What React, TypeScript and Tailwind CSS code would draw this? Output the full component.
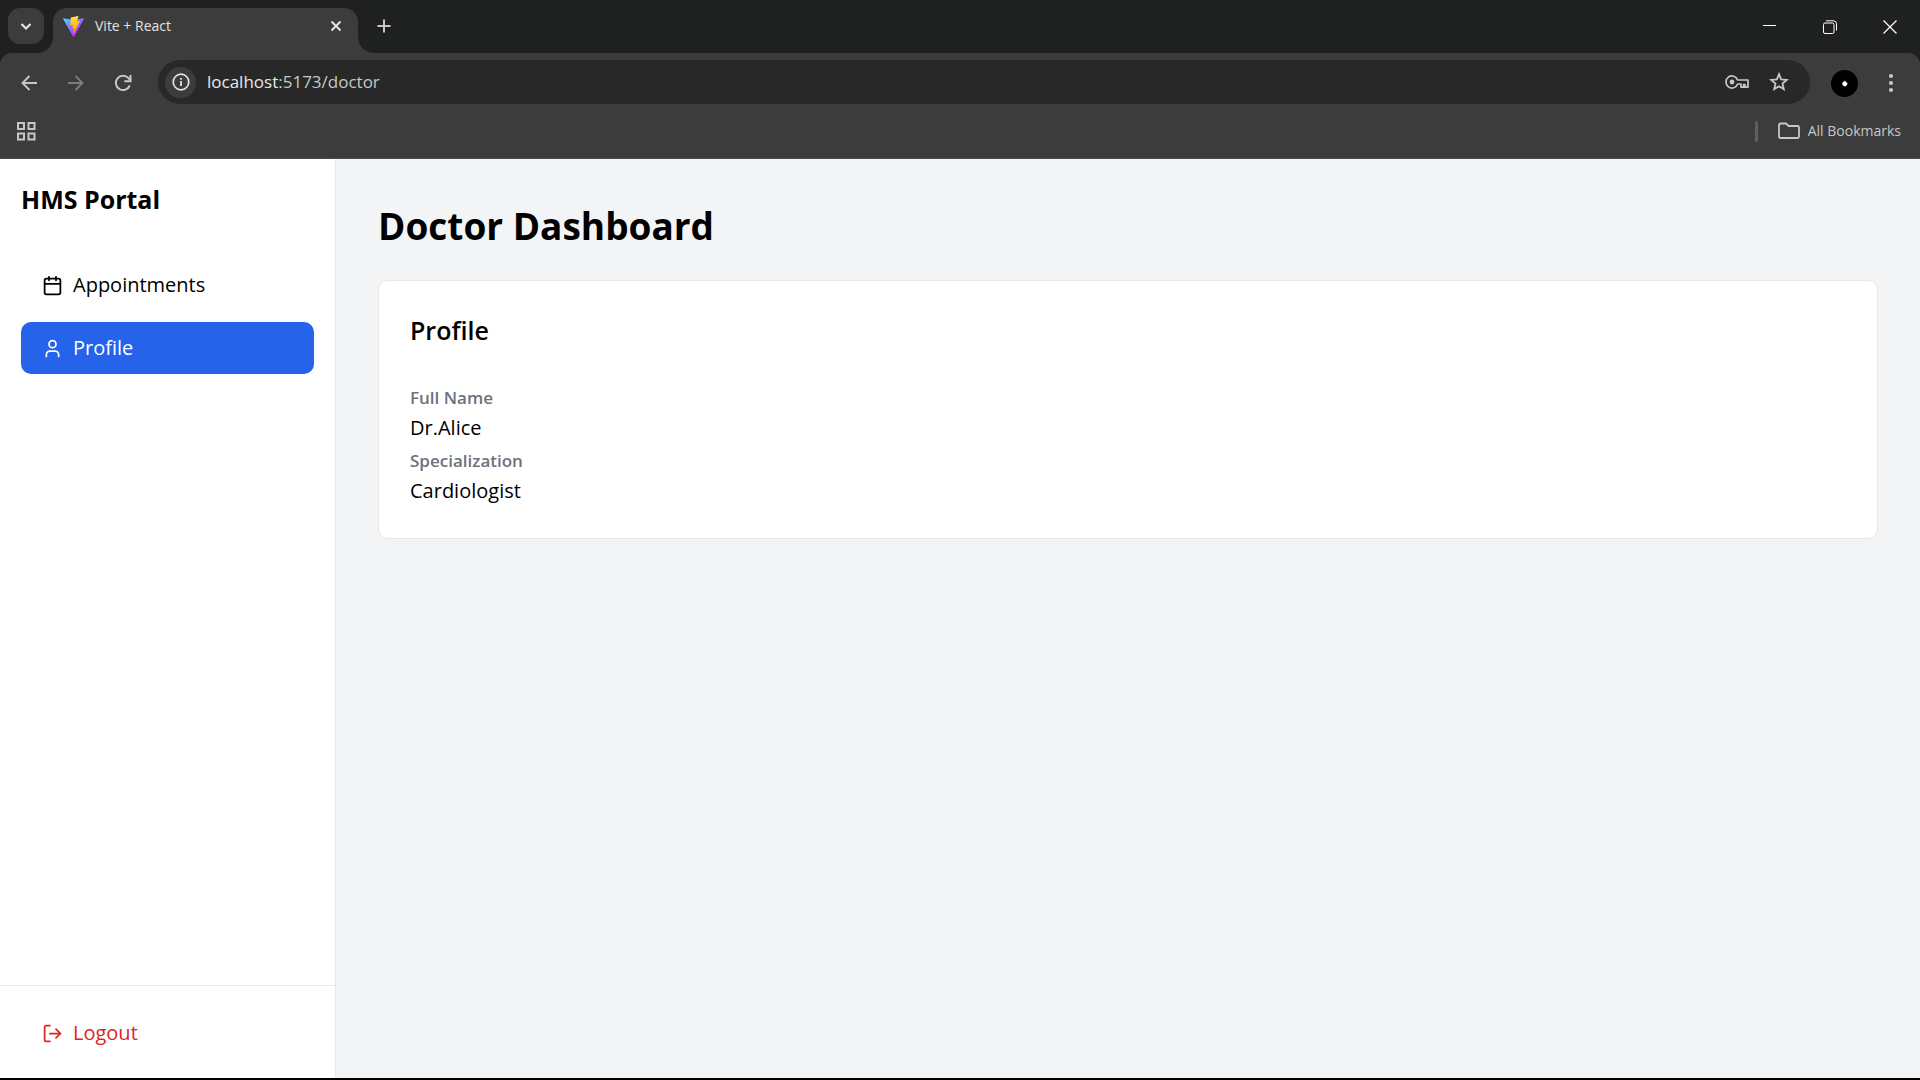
import type { ReactNode } from "react";
import { Calendar, LogOut, User, type LucideIcon } from "lucide-react";

function ViteLogo() {
  return (
    <svg viewBox="0 0 256 257" className="h-[21px] w-[21px]" aria-hidden="true">
      <defs>
        <linearGradient id="vite-body" x1="-.828%" x2="57.636%" y1="7.652%" y2="78.411%">
          <stop offset="0%" stopColor="#41D1FF" />
          <stop offset="100%" stopColor="#BD34FE" />
        </linearGradient>
        <linearGradient id="vite-bolt" x1="43.376%" x2="50.316%" y1="2.242%" y2="89.03%">
          <stop offset="0%" stopColor="#FFEA83" />
          <stop offset="8.333%" stopColor="#FFDD35" />
          <stop offset="100%" stopColor="#FFA800" />
        </linearGradient>
      </defs>
      <path
        fill="url(#vite-body)"
        d="M255.153 37.938L134.897 252.976c-2.483 4.44-8.862 4.466-11.382.048L.875 37.958c-2.746-4.814 1.371-10.646 6.827-9.67l120.385 21.517a6.537 6.537 0 0 0 2.322-.004l117.867-21.483c5.438-.991 9.574 4.796 6.877 9.62Z"
      />
      <path
        fill="url(#vite-bolt)"
        d="M185.432.063L96.44 17.501a3.268 3.268 0 0 0-2.634 3.014l-5.474 92.456a3.268 3.268 0 0 0 3.997 3.378l24.777-5.718c2.318-.535 4.413 1.507 3.936 3.838l-7.361 36.047c-.495 2.426 1.782 4.5 4.151 3.78l15.304-4.649c2.372-.72 4.652 1.36 4.15 3.788l-11.698 56.621c-.732 3.542 3.979 5.473 5.943 2.437l1.313-2.028l72.516-144.72c1.215-2.423-.88-5.186-3.54-4.672l-25.505 4.922c-2.396.462-4.435-1.77-3.759-4.114l16.646-57.705c.677-2.35-1.37-4.583-3.769-4.113Z"
      />
    </svg>
  );
}

type GlyphProps = { size: string; box: string; children: ReactNode };

function Glyph({ size, box, children }: GlyphProps) {
  return (
    <svg viewBox={box} className={size} fill="none" stroke="currentColor" aria-hidden="true">
      {children}
    </svg>
  );
}

function ChromeButton({ label, className, children }: { label: string; className: string; children: ReactNode }) {
  return (
    <button type="button" aria-label={label} className={`flex shrink-0 items-center justify-center ${className}`}>
      {children}
    </button>
  );
}

function TabStrip() {
  return (
    <div className="flex h-[53px] bg-[#1f2120] pl-2 text-[#e3e3e3]">
      <ChromeButton label="Search tabs" className="relative z-10 mt-2 h-9 w-9 rounded-xl bg-[#3c3c3c]">
        <Glyph size="h-3 w-3" box="0 0 12 12">
          <path d="M1.500 4l4.500 4.500L10.500 4" strokeWidth="2.200" />
        </Glyph>
      </ChromeButton>
      <div className="relative mt-2 ml-[9px] flex h-[45px] w-[305px] items-start rounded-t-[14px] bg-[#3c3c3c]">
        <span className="absolute bottom-0 -left-4 h-4 w-4 bg-[#3c3c3c]">
          <span className="block h-4 w-4 rounded-br-2xl bg-[#1f2120]" />
        </span>
        <span className="absolute -right-4 bottom-0 h-4 w-4 bg-[#3c3c3c]">
          <span className="block h-4 w-4 rounded-bl-2xl bg-[#1f2120]" />
        </span>
        <div className="flex h-9 flex-1 items-center pr-3 pl-[10px]">
          <ViteLogo />
          <span className="ml-[11px] flex-1 text-[14px] leading-5">Vite + React</span>
          <ChromeButton label="Close tab" className="h-5 w-5">
            <Glyph size="h-3 w-3" box="0 0 12 12">
              <path d="M1.500 1.500l9 9M10.500 1.500l-9 9" strokeWidth="2" />
            </Glyph>
          </ChromeButton>
        </div>
      </div>
      <ChromeButton label="New tab" className="mt-2 ml-2 h-9 w-9 text-[#c7c7c7]">
        <Glyph size="h-[14px] w-[14px]" box="0 0 14 14">
          <path d="M7 0.500v13M0.500 7h13" strokeWidth="2" />
        </Glyph>
      </ChromeButton>
      <div className="ml-auto flex text-white">
        <ChromeButton label="Minimize" className="h-[53px] w-[60px]">
          <Glyph size="h-[13px] w-[13px]" box="0 0 13 13">
            <path d="M0 5.500h13" />
          </Glyph>
        </ChromeButton>
        <ChromeButton label="Restore" className="h-[53px] w-[61px]">
          <Glyph size="h-[14px] w-[14px]" box="0 0 14 14">
            <rect x="0.500" y="3" width="10.500" height="10.500" rx="1.500" />
            <path d="M3 0.800h7.500a3 3 0 0 1 3 3V10.500" />
          </Glyph>
        </ChromeButton>
        <ChromeButton label="Close window" className="h-[53px] w-[60px]">
          <Glyph size="h-[14px] w-[14px]" box="0 0 14 14">
            <path d="M0.500 0.500l13 13M13.500 0.500l-13 13" strokeWidth="1.200" />
          </Glyph>
        </ChromeButton>
      </div>
    </div>
  );
}

function AddressBar() {
  return (
    <div className="bg-[#1f2120]">
      <div className="flex h-[51px] items-end rounded-t-xl bg-[#3c3c3c] px-[11px] text-[#c7c7c7]">
        <ChromeButton label="Back" className="h-[42px] w-9">
          <Glyph size="h-4 w-4" box="0 0 16 16">
            <path d="M16 8H1.500M8.500 1L1.500 8l7 7" strokeWidth="1.900" />
          </Glyph>
        </ChromeButton>
        <ChromeButton label="Forward" className="ml-[11px] h-[42px] w-9 text-[#7d7d7d]">
          <Glyph size="h-4 w-4" box="0 0 16 16">
            <path d="M0 8h14.500M7.500 1l7 7l-7 7" strokeWidth="1.900" />
          </Glyph>
        </ChromeButton>
        <ChromeButton label="Reload" className="ml-[11px] h-[42px] w-9">
          <Glyph size="h-[18px] w-[18px]" box="0 0 18 18">
            <path d="M15.800 11.300A7.200 7.200 0 1 1 14.500 4.200L16.500 6.400" strokeWidth="2" />
            <path d="M16.500 1v6.300H10.300" strokeWidth="2" />
          </Glyph>
        </ChromeButton>
        <div className="ml-[17px] flex h-11 flex-1 items-center rounded-full bg-[#282828] pr-5 pl-[7px]">
          <ChromeButton label="Site information" className="h-[31px] w-[31px] rounded-full bg-[#3c3c3c] text-[#e3e3e3]">
            <Glyph size="h-[18px] w-[18px]" box="0 0 18 18">
              <circle cx="9" cy="9" r="7.800" strokeWidth="1.700" />
              <path d="M9 8v5M9 5v1.800" strokeWidth="1.800" />
            </Glyph>
          </ChromeButton>
          <p className="ml-[11px] flex-1 text-[17px] leading-6 text-[#c7c7c7]">
            <span className="text-[#e8e8e8]">localhost</span>:5173/doctor
          </p>
          <ChromeButton label="Manage passwords" className="h-8 w-[42px]">
            <Glyph size="h-4 w-6" box="0 0 24 16">
              <path
                d="M12.600 6A6 6 0 1 0 12.600 10H16V13.200H18.600V10.500H20V13.200H23V6Z"
                strokeWidth="1.700"
                strokeLinejoin="round"
              />
              <circle cx="7" cy="8" r="2.400" fill="currentColor" stroke="none" />
            </Glyph>
          </ChromeButton>
          <ChromeButton label="Bookmark this tab" className="-mr-[10px] h-8 w-[42px]">
            <Glyph size="h-5 w-5" box="0 0 20 20">
              <path
                d="M10 2.200l2.100 5.200l5.700.5l-4.300 3.700l1.300 5.500L10 14.200l-4.800 2.900l1.300-5.500L2.200 7.900l5.700-.5z"
                strokeWidth="1.800"
              />
            </Glyph>
          </ChromeButton>
        </div>
        <ChromeButton label="Profile menu" className="ml-4 h-[42px] w-9">
          <span className="flex h-[27px] w-[27px] items-center justify-center rounded-full bg-black">
            <Glyph size="h-[7px] w-[7px]" box="0 0 7 7">
              <path d="M4 .5L5 2L6.500 3L6 5L4.500 6.500L2.800 6L1.200 4.500L1.500 2.500L3 1.500z" fill="#fff" stroke="none" />
            </Glyph>
          </span>
        </ChromeButton>
        <ChromeButton label="Browser menu" className="ml-[11px] h-[42px] w-9">
          <Glyph size="h-5 w-5" box="0 0 20 20">
            <g fill="currentColor" stroke="none">
              <circle cx="10" cy="3" r="2.100" />
              <circle cx="10" cy="10" r="2.100" />
              <circle cx="10" cy="17" r="2.100" />
            </g>
          </Glyph>
        </ChromeButton>
      </div>
    </div>
  );
}

function BookmarksBar() {
  return (
    <div className="flex h-[55px] items-center border-b border-[#4a4a4a] bg-[#3c3c3c] px-4 text-[#c7c7c7]">
      <ChromeButton label="Apps" className="h-6 w-5">
        <Glyph size="h-[19px] w-[19px]" box="0 0 19 19">
          <g strokeWidth="2">
            <rect x="1" y="1" width="6" height="6" />
            <rect x="11.500" y="1" width="6" height="6" />
            <rect x="1" y="11.500" width="6" height="6" />
            <rect x="11.500" y="11.500" width="6" height="6" />
          </g>
        </Glyph>
      </ChromeButton>
      <span className="mr-5 ml-auto h-[21px] w-[3px] rounded-full bg-[#5e5e5e]" />
      <button type="button" className="mr-[3px] flex items-center gap-2 text-[14px] leading-5">
        <Glyph size="h-[18px] w-[22px]" box="0 0 22 18">
          <path
            d="M1 14.500V3a1.500 1.500 0 0 1 1.500-1.500H8L10.500 4H19.500A1.500 1.500 0 0 1 21 5.500V14.500A1.500 1.500 0 0 1 19.500 16H2.500A1.500 1.500 0 0 1 1 14.500z"
            strokeWidth="1.800"
          />
        </Glyph>
        All Bookmarks
      </button>
    </div>
  );
}

type NavItem = { label: string; icon: LucideIcon; active: boolean };

const navItems: NavItem[] = [
  { label: "Appointments", icon: Calendar, active: false },
  { label: "Profile", icon: User, active: true },
];

function Sidebar() {
  return (
    <aside className="flex w-[336px] shrink-0 flex-col border-r border-[#e5e7eb] bg-white">
      <h2 className="px-[21px] pt-[21px] text-[25px] leading-[38px] font-bold">HMS Portal</h2>
      <nav className="mt-[41px] flex flex-1 flex-col gap-[11px] px-[21px]">
        {navItems.map(({ label, icon: Icon, active }) => (
          <button
            key={label}
            type="button"
            aria-current={active ? "page" : undefined}
            className={
              active
                ? "flex h-[52px] items-center gap-[10px] rounded-[10px] bg-[#2563eb] px-[21px] text-[20px] text-white"
                : "flex h-[52px] items-center gap-[10px] rounded-[10px] px-[21px] text-[20px]"
            }
          >
            <Icon className="h-[21px] w-[21px]" />
            {label}
          </button>
        ))}
      </nav>
      <div className="border-t border-[#e5e7eb] px-[21px] pt-[21px] pb-[19px]">
        <button type="button" className="flex h-[52px] w-full items-center gap-[10px] px-[21px] text-[20px] text-[#dc2626]">
          <LogOut className="h-[21px] w-[21px]" />
          Logout
        </button>
      </div>
    </aside>
  );
}

const details = [
  { term: "Full Name", value: "Dr.Alice" },
  { term: "Specialization", value: "Cardiologist" },
];

export default function App() {
  return (
    <div className="flex h-screen flex-col border-b-2 border-black bg-[#f3f4f6] font-['Open_Sans',sans-serif] text-black">
      <header>
        <TabStrip />
        <AddressBar />
        <BookmarksBar />
      </header>
      <div className="flex min-h-0 flex-1">
        <Sidebar />
        <main className="flex-1 px-[42px] pt-[42px]">
          <h1 className="text-[37px] leading-[50px] font-bold">Doctor Dashboard</h1>
          <section className="mt-[29px] rounded-[10px] border border-[#e5e7eb] bg-white px-[31px] pt-[31px] pb-[28px]">
            <h2 className="text-[25px] leading-9 font-semibold">Profile</h2>
            <dl className="mt-9">
              {details.map(({ term, value }) => (
                <div key={term} className="pb-[3px]">
                  <dt className="text-[17px] leading-7 font-semibold text-[#6b7280]">{term}</dt>
                  <dd className="text-[20px] leading-8">{value}</dd>
                </div>
              ))}
            </dl>
          </section>
        </main>
      </div>
    </div>
  );
}
